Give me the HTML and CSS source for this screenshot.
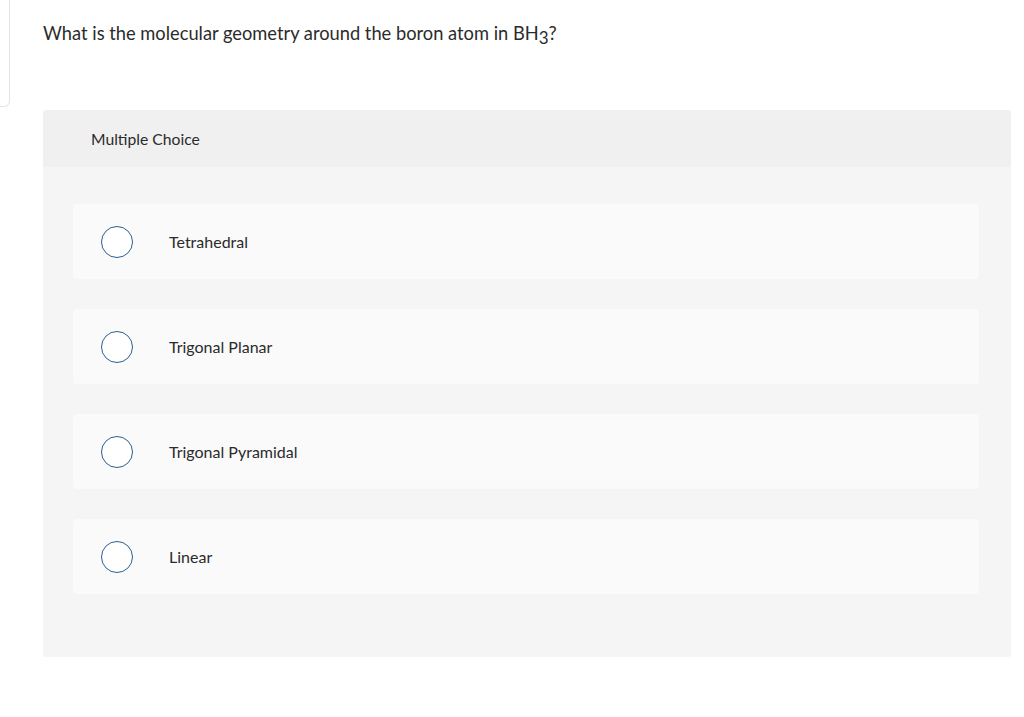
FILE: index.html
```html
<!DOCTYPE html>
<html lang="en">
<head>
<meta charset="utf-8">
<title>Multiple Choice</title>
<link rel="stylesheet" href="styles.css">
</head>
<body>
<div class="page">
  <div class="stub"></div>
  <main class="main">
    <p class="question">What is the molecular geometry around the boron atom in BH<sub>3</sub>?</p>
    <section class="panel">
      <div class="panel-head">Multiple Choice</div>
      <div class="options">
        <label class="option"><span class="radio"></span><span class="label">Tetrahedral</span></label>
        <label class="option"><span class="radio"></span><span class="label">Trigonal Planar</span></label>
        <label class="option"><span class="radio"></span><span class="label">Trigonal Pyramidal</span></label>
        <label class="option"><span class="radio"></span><span class="label">Linear</span></label>
      </div>
    </section>
  </main>
</div>
</body>
</html>
```

FILE: styles.css
```css
html, body {
  margin: 0;
  padding: 0;
  background: #ffffff;
}
body {
  font-family: Lato, "Liberation Sans", sans-serif;
  color: #2b2b2b;
}
.page {
  display: flex;
  align-items: flex-start;
}
.stub {
  flex: none;
  width: 10px;
  height: 111px;
  margin-top: -4px;
  border: 1px solid #e4e4e4;
  border-left: none;
  border-radius: 0 6px 6px 0;
  box-sizing: border-box;
}
.main {
  margin-left: 33px;
  width: 968px;
}
.question {
  margin: 0;
  padding-top: 22px;
  font-size: 18.3px;
  line-height: 22px;
  height: 110px;
  box-sizing: border-box;
}
.question sub {
  font-size: 17px;
  vertical-align: -4px;
  line-height: 0;
}
.panel {
  background: #f5f5f5;
  border-radius: 3px;
  padding-bottom: 63px;
}
.panel-head {
  background: #f0f0f0;
  border-radius: 3px 3px 0 0;
  height: 57px;
  box-sizing: border-box;
  padding-left: 48px;
  display: flex;
  align-items: center;
  font-size: 15.7px;
}
.options {
  display: flex;
  flex-direction: column;
  gap: 30px;
  padding: 37px 32px 0 30px;
}
.option {
  display: flex;
  align-items: center;
  height: 75px;
  background: #fafafa;
  border-radius: 4px;
  padding-left: 28px;
}
.radio {
  flex: none;
  width: 32px;
  height: 32px;
  box-sizing: border-box;
  border: 1.5px solid #2c5f92;
  border-radius: 50%;
  background: #ffffff;
}
.label {
  margin-left: 36px;
  font-size: 16px;
}
```
